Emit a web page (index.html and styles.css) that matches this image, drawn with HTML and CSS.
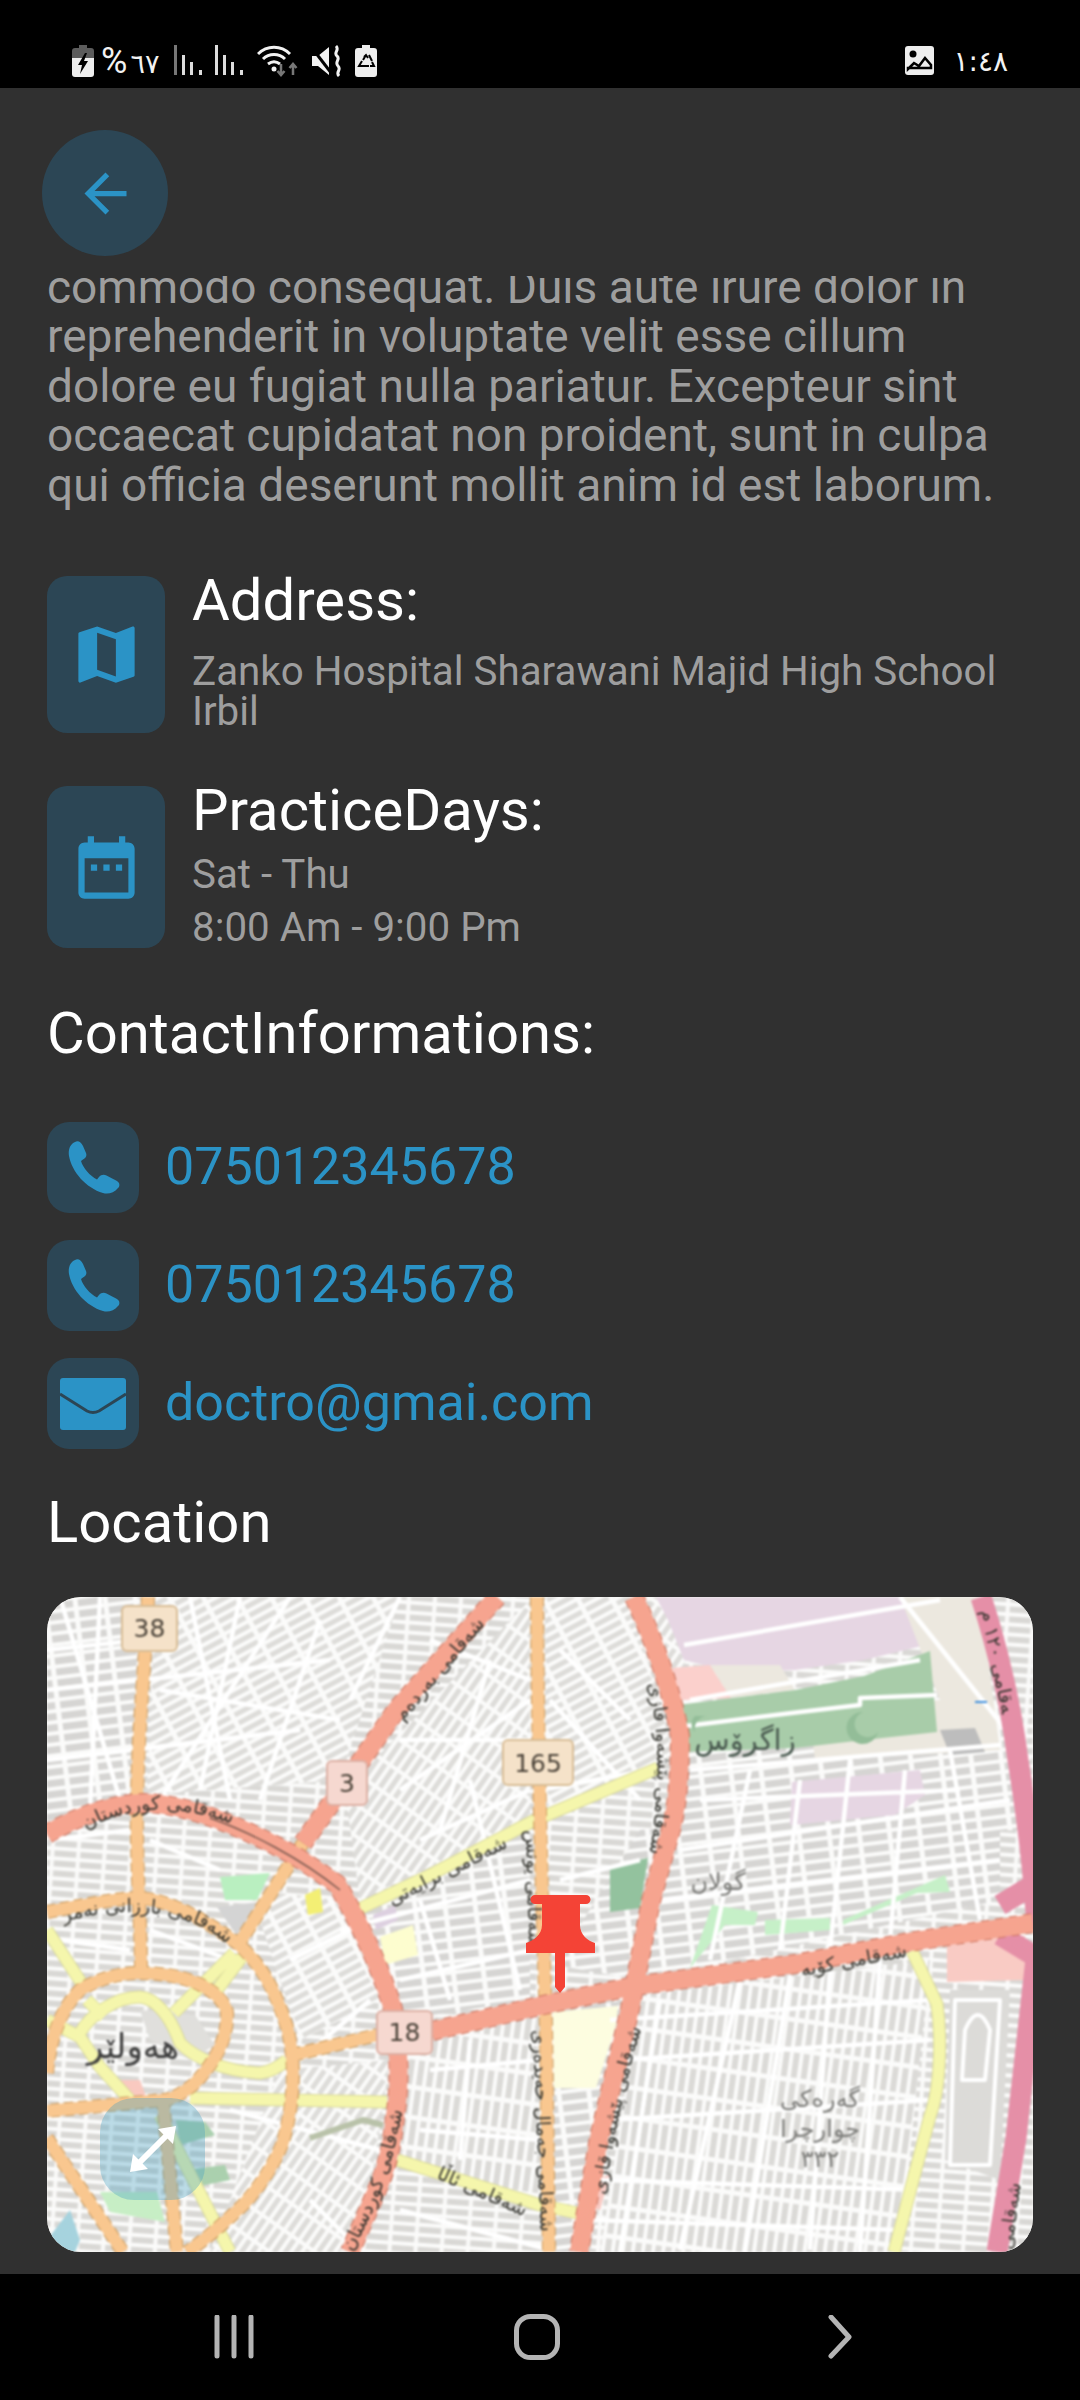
FILE: index.html
```html
<!DOCTYPE html>
<html lang="en">
<head>
  <meta charset="UTF-8" />
  <meta name="viewport" content="width=device-width, initial-scale=1.0"/>
  <title>Doctor Details</title>
  <link rel="stylesheet" href="styles.css">
</head>
<body>
  <header class="status-bar">
    <div class="status-group">
      <svg class="st-icon" width="22" height="32" viewBox="0 0 22 32">
        <path fill="#5c5c5c" d="M7 0h8v3h4a3 3 0 0 1 3 3v7H0V6a3 3 0 0 1 3-3h4z"/>
        <path fill="#eee" d="M0 13h22v16a3 3 0 0 1-3 3H3a3 3 0 0 1-3-3z"/>
        <path fill="#000" d="M13 8l-7 12h4l-2 9 8-13h-4l3-8z"/>
      </svg>
      <span class="st-text st-pct"><span class="st-sign">%</span>٦٧</span>
      <svg class="st-icon st-signal" width="29" height="30" viewBox="0 0 29 30">
        <rect x="0" y="0" width="3" height="30" fill="#777"/>
        <rect x="8" y="10" width="3" height="20" fill="#ddd"/>
        <rect x="16" y="17" width="3" height="13" fill="#ddd"/>
        <rect x="25" y="25" width="3" height="5" fill="#ddd"/>
      </svg>
      <svg class="st-icon st-signal" width="29" height="30" viewBox="0 0 29 30">
        <rect x="0" y="0" width="3" height="30" fill="#ddd"/>
        <rect x="8" y="10" width="3" height="20" fill="#ddd"/>
        <rect x="16" y="17" width="3" height="13" fill="#ddd"/>
        <rect x="25" y="25" width="3" height="5" fill="#ddd"/>
      </svg>
      <svg class="st-icon" width="42" height="32" viewBox="0 0 42 32">
        <path fill="none" stroke="#f2f2f2" stroke-width="3" d="M1 9C10 0 24 0 33 9M6 14c6-6 16-6 22 0M11 19c4-3 8-3 12 0"/>
        <circle cx="17" cy="24" r="2.5" fill="#f2f2f2"/>
        <path fill="none" stroke="#777" stroke-width="2.5" d="M24 19v11m-3.500-4l3.500 4 3.500-4M36 30V19m-3.500 4l3.500-4 3.500 4"/>
      </svg>
      <svg class="st-icon" width="30" height="32" viewBox="0 0 30 32">
        <path fill="#f2f2f2" d="M0 11h6l11-9v28L6 21H0z"/>
        <path fill="none" stroke="#000" stroke-width="3" d="M0 3l20 26"/>
        <path fill="none" stroke="#f2f2f2" stroke-width="3" d="M24 1c4 4-3 7 1 10s-3 6 1 10-3 6 1 10"/>
      </svg>
      <svg class="st-icon" width="22" height="32" viewBox="0 0 22 32">
        <path fill="#eee" d="M7 0h8v3h4a3 3 0 0 1 3 3v23a3 3 0 0 1-3 3H3a3 3 0 0 1-3-3V6a3 3 0 0 1 3-3h4z"/>
        <path fill="none" stroke="#000" stroke-width="2" d="M11 10l-3 5m6-5l3 6m-2 5h4l-2-4M8 21H4l3-5m1 5h6m-5-9l2-2 2 3"/>
      </svg>
    </div>
    <div class="status-group status-right">
      <svg width="29" height="29" viewBox="0 0 29 29">
        <rect width="29" height="29" rx="3" fill="#eee"/>
        <circle cx="8" cy="8" r="3.500" fill="#000"/>
        <path fill="none" stroke="#000" stroke-width="2.500" d="M3 23l6-6 5 3 6-8 6 7v3H3z"/>
      </svg>
      <span class="st-text st-time">١:٤٨</span>
    </div>
  </header>

  <main class="content">
    <button class="back-btn">
      <svg width="63" height="63" viewBox="0 0 24 24"><path d="M20 11H7.830l5.590-5.590L12 4l-8 8 8 8 1.410-1.410L7.830 13H20v-2z"/></svg>
    </button>

    <div class="about">
      <p>commodo consequat. Duis aute irure dolor in reprehenderit in voluptate velit esse cillum dolore eu fugiat nulla pariatur. Excepteur sint occaecat cupidatat non proident, sunt in culpa qui officia deserunt mollit anim id est laborum.</p>
    </div>

    <section class="info-row address">
      <div class="info-icon">
        <svg width="75" height="75" viewBox="0 0 24 24"><path d="M20.500 3l-.16.030L15 5.100 9 3 3.360 4.900c-.21.070-.36.250-.36.480V20.500c0 .280.220.500.500.500l.16-.030L9 18.900l6 2.100 5.640-1.900c.21-.070.360-.250.360-.480V3.500c0-.280-.220-.500-.500-.500zM15 19l-6-2.110V5l6 2.110V19z"/></svg>
      </div>
      <div class="info-body">
        <h3 class="title">Address:</h3>
        <p class="sub sub-tight">Zanko Hospital Sharawani Majid High School Irbil</p>
      </div>
    </section>

    <section class="info-row days">
      <div class="info-icon">
        <svg width="75" height="75" viewBox="0 0 24 24"><path d="M9 11H7v2h2v-2zm4 0h-2v2h2v-2zm4 0h-2v2h2v-2zm2-7h-1V2h-2v2H8V2H6v2H5c-1.110 0-1.990.900-1.990 2L3 20c0 1.100.890 2 2 2h14c1.100 0 2-.900 2-2V6c0-1.100-.900-2-2-2zm0 16H5V9h14v11z"/></svg>
      </div>
      <div class="info-body">
        <h3 class="title">PracticeDays:</h3>
        <p class="sub sub-days">Sat - Thu</p>
        <p class="sub sub-days">8:00 Am - 9:00 Pm</p>
      </div>
    </section>

    <h3 class="title contact-title">ContactInformations:</h3>

    <div class="contact-list">
      <div class="contact-row">
        <div class="contact-icon">
          <svg width="53" height="53" viewBox="0 0 53 53"><path d="M8 1C11-1 14 1 16 5l3 7c1 3 0 5-3 6.500l-2 1.500c2 7 9 15 16 18.500l2-2.500c2-2.500 5-3 7.500-1.500L50 40c3 2 3 5 1 7-4 5-10 6.500-15 5C19 47 5 31 2 15 1 9 3 3 8 1z"/></svg>
        </div>
        <span class="contact-text">075012345678</span>
      </div>
      <div class="contact-row">
        <div class="contact-icon">
          <svg width="53" height="53" viewBox="0 0 53 53"><path d="M8 1C11-1 14 1 16 5l3 7c1 3 0 5-3 6.500l-2 1.500c2 7 9 15 16 18.500l2-2.500c2-2.500 5-3 7.500-1.500L50 40c3 2 3 5 1 7-4 5-10 6.500-15 5C19 47 5 31 2 15 1 9 3 3 8 1z"/></svg>
        </div>
        <span class="contact-text">075012345678</span>
      </div>
      <div class="contact-row">
        <div class="contact-icon">
          <svg width="66" height="52" viewBox="0 0 66 52">
            <rect width="66" height="52" rx="3"/>
            <path class="env-fold" d="M0 16l27 17q6 3 12 0l27-17"/>
          </svg>
        </div>
        <span class="contact-text">doctro@gmai.com</span>
      </div>
    </div>

    <h3 class="title location-title">Location</h3>

    <div class="map">
      <svg class="map-svg" width="986" height="655" viewBox="47 1597 986 655">
        <defs>
          <pattern id="blk-a" width="26" height="10" patternUnits="userSpaceOnUse" patternTransform="rotate(4)">
            <rect width="26" height="10" fill="#fbfbfa"/>
            <rect x="1.500" y="2" width="22" height="6" fill="#d9d8d5"/>
          </pattern>
          <pattern id="blk-b" width="10" height="30" patternUnits="userSpaceOnUse" patternTransform="rotate(8)">
            <rect width="10" height="30" fill="#fbfbfa"/>
            <rect x="2" y="2" width="6" height="25" fill="#dbdad7"/>
          </pattern>
          <pattern id="blk-c" width="30" height="9" patternUnits="userSpaceOnUse" patternTransform="rotate(-28)">
            <rect width="30" height="9" fill="#fbfbfa"/>
            <rect x="2" y="2" width="25" height="5" fill="#dddcd9"/>
          </pattern>
          <pattern id="blk-d" width="9" height="26" patternUnits="userSpaceOnUse" patternTransform="rotate(35)">
            <rect width="9" height="26" fill="#fbfbfa"/>
            <rect x="2" y="2" width="5" height="22" fill="#dddcd9"/>
          </pattern>
          <pattern id="blk-e" width="30" height="11" patternUnits="userSpaceOnUse" patternTransform="rotate(-7)">
            <rect width="30" height="11" fill="#fbfbfa"/>
            <rect x="2" y="2" width="25" height="7" fill="#d6d5d3"/>
          </pattern>

          <g id="minor">
            <path d="M47 1690L330 1660M47 1760L300 1730M190 1597L230 1800M290 1597L160 1800M60 1597L120 1800M400 1597L350 1700"/>
            <path d="M47 1650L140 1640M100 1597L90 1810M240 1597L200 1790M320 1620L260 1800M160 1690L340 1720"/>
            <path d="M400 1790L530 1700M420 1840L530 1790M340 1930L530 1880M400 1980L530 1950M470 1780L520 1990"/>
            <path d="M430 1640L530 1680M400 1740L530 1740M490 1660L440 1830M420 1900L450 2000"/>
            <path d="M560 1650L630 1720M550 1700L640 1800M540 1790L650 1770M560 1880L640 1860"/>
            <path d="M690 1770L1000 1745M680 1850L1010 1800M750 1770L710 1960M850 1760L830 1950M950 1750L980 1920"/>
            <path d="M700 1800L960 1790M800 1780L780 1950M905 1770L890 1940M660 1900L1000 1860"/>
            <path d="M620 2060L930 2040M610 2120L930 2100M600 2180L920 2190M740 1980L680 2250M830 1970L810 2250"/>
            <path d="M660 2000L620 2252M790 1975L745 2252M880 1960L860 2252M610 2020L930 2000M590 2220L900 2230"/>
            <path d="M430 2070L540 2060M420 2130L540 2140M470 2040L460 2160M400 2210L550 2250"/>
            <path d="M230 2110L380 2150M300 2060L370 2000M290 1960L370 1920M310 2200L360 2250"/>
            <path d="M50 1840L130 1830M150 1840L220 1870M60 1940L130 1950M150 1930L230 1960"/>
            <path d="M684 1645L940 1600M690 1700L920 1660M900 1597L1030 1760"/>
            <path d="M678 1727L800 1712L860 1705L860 1698L937 1695"/>
          </g>
          <g id="r-orange">
            <path d="M148 1597C146 1660 138 1720 137 1803C136 1870 141 1920 141 1973"/>
            <path d="M47 1912C100 1902 120 1898 140 1898C170 1900 205 1920 237 1943C262 1965 275 1990 287 2027C298 2070 292 2110 283 2142C272 2170 255 2192 243 2205C222 2225 205 2240 187 2252"/>
            <path d="M47 2073C50 2040 60 2010 80 1990C100 1978 120 1973 140 1973C165 1973 185 1978 197 1983C212 1990 224 2000 227 2012C228 2035 218 2060 193 2085C180 2095 170 2100 163 2100L47 2111"/>
            <path d="M303 1843L240 1942"/>
            <path d="M293 2055L377 2035"/>
            <path d="M163 2100L177 2252M47 2138L123 2252"/>
            <path d="M537 1597C538 1800 544 1950 546 2026L549 2252"/>
          </g>
          <g id="r-yellow">
            <path d="M912 1951L937 2004C942 2040 940 2090 930 2116L894 2252"/>
            <path d="M357 1910L430 1875L533 1821L658 1768"/>
            <path d="M47 1930L84 1987M87 2000L104 2017M174 2013L234 1953M217 1990L242 1957"/>
            <path d="M80 2033C90 2015 115 1997 140 1997C155 1998 170 2015 180 2043C195 2058 225 2072 260 2073C270 2072 280 2066 287 2060"/>
            <path d="M47 2020L80 2037L100 2067L130 2100"/>
            <path d="M190 2098L387 2102"/>
            <path d="M397 2160L540 2205L582 2214"/>
            <path d="M160 2115L230 2252"/>
          </g>
          <g id="r-salmon">
            <path d="M47 1834C80 1815 115 1803 147 1803C190 1805 245 1828 297 1857L337 1884C355 1915 378 1960 393 2009C400 2050 400 2090 395 2116C392 2150 385 2170 380 2183L350 2252"/>
            <path d="M497 1597L397 1709L347 1781L303 1843"/>
            <path d="M634 1597C650 1630 672 1690 680 1736C680 1770 678 1800 672 1826L651 1901L630 2009L599 2138L579 2252"/>
            <path d="M432 2031L548 2004L634 1986L795 1964L909 1942L1033 1923"/>
          </g>
          <g id="r-pink">
            <path d="M981 1597C995 1640 1010 1700 1018 1760C1026 1810 1034 1870 1037 1930"/>
            <path d="M1037 1950L1016 2138L997 2252"/>
            <path d="M1000 1905L1033 1885M1000 1935L1033 1955"/>
          </g>

          <path id="lbl-kurd" d="M86 1830C130 1805 175 1803 232 1824"/>
          <path id="lbl-barz" d="M64 1922C110 1908 180 1905 222 1940"/>
          <path id="lbl-bard" d="M403 1722L482 1628"/>
          <path id="lbl-bray" d="M392 1906L510 1846"/>
          <path id="lbl-gorgi" d="M352 2252C375 2210 392 2170 402 2112"/>
          <path id="lbl-ala" d="M436 2178L532 2220"/>
          <path id="lbl-koya" d="M802 1976L910 1956"/>
          <path id="lbl-pish1" d="M648 1684C660 1730 660 1790 650 1850"/>
          <path id="lbl-pish2" d="M605 2195C615 2130 628 2070 644 2020"/>
          <path id="lbl-jam1" d="M526 1830L530 1985"/>
          <path id="lbl-jam2" d="M533 2030L541 2240"/>
          <path id="lbl-moto1" d="M981 1611L1002 1714"/>
          <path id="lbl-moto2" d="M1012 2250L1022 2175"/>
        </defs>

        <g class="map-soft">
          <rect x="47" y="1597" width="986" height="655" fill="url(#blk-a)"/>
          <polygon points="47,1597 140,1597 130,1800 47,1830" fill="url(#blk-e)"/>
          <polygon points="155,1597 400,1597 340,1780 147,1795" fill="url(#blk-c)"/>
          <polygon points="345,1790 530,1600 530,1820 360,1900" fill="url(#blk-d)"/>
          <polygon points="545,1597 630,1597 675,1760 545,1810" fill="url(#blk-c)"/>
          <polygon points="345,1920 530,1830 530,2000 400,2020" fill="url(#blk-e)"/>
          <polygon points="405,2040 540,2015 540,2200 400,2160" fill="url(#blk-b)"/>
          <polygon points="280,2070 390,2060 370,2190 340,2252 210,2252" fill="url(#blk-d)"/>
          <polygon points="250,1890 340,1900 380,2000 300,2040" fill="url(#blk-c)"/>
          <polygon points="555,1965 640,1830 1000,1800 1000,1900 640,1980" fill="url(#blk-e)"/>
          <polygon points="690,1720 1000,1700 1020,1830 680,1840" fill="url(#blk-e)"/>
          <polygon points="550,2010 630,2000 590,2252 550,2252" fill="url(#blk-e)"/>
          <polygon points="640,1995 930,1960 900,2252 600,2252" fill="url(#blk-b)"/>
          <polygon points="650,1597 660,1597 690,1650 660,1720" fill="url(#blk-d)"/>

          <!-- land use -->
          <polygon points="656,1597 900,1597 926,1645 864,1660 795,1670 730,1672 684,1660 668,1620" fill="#e6d6e3"/>
          <polygon points="900,1597 980,1597 1000,1750 815,1760 810,1715 940,1700" fill="#ece8df"/>
          <polygon points="672,1668 710,1665 731,1698 680,1700" fill="#fbd0cc"/>
          <polygon points="710,1665 780,1665 795,1690 731,1698" fill="#ece8df"/>
          <polygon points="678,1705 733,1698 795,1690 864,1676 930,1651 937,1732 864,1740 795,1748 685,1752" fill="#a8cca9"/>
          <polygon points="940,1730 975,1728 985,1752 950,1755" fill="#bdbdbd"/>
          <polygon points="792,1782 920,1770 925,1795 895,1815 790,1825" fill="#e6d6e3"/>
          <polygon points="843,1920 945,1875 950,1892 917,1893 843,1925" fill="#c6f0c8"/>
          <polygon points="765,1920 830,1918 830,1930 765,1935" fill="#c6f0c8"/>
          <polygon points="690,1968 712,1905 758,1912 755,1925 725,1925" fill="#c6f0c8"/>
          <polygon points="610,1866 648,1858 640,1908 610,1912" fill="#93c29e"/>
          <polygon points="553,2012 618,2006 616,2025 596,2088 554,2088" fill="#fdfde0"/>
          <polygon points="947,1940 1025,1936 1025,1980 947,1982" fill="#f9cbc4"/>
          <polygon points="950,1990 1010,1990 1000,2180 945,2160" fill="#dcdbd8"/>
          <polygon points="220,1877 270,1873 257,1900 225,1900" fill="#b9efc0"/>
          <polygon points="217,1907 260,1902 237,1936" fill="#d4d4d4"/>
          <polygon points="380,1937 413,1925 418,1955 385,1965" fill="#fdfdcf"/>
          <polygon points="373,1915 395,1905 398,1920 376,1930" fill="#ddd0e0"/>
          <polygon points="100,2192 157,2192 165,2222 110,2212" fill="#c7eec5"/>
          <polygon points="117,2080 140,2080 148,2102 120,2102" fill="#f9c9c0"/>
          <polygon points="176,2120 205,2122 215,2135 180,2145" fill="#aad0ae"/>
          <polygon points="185,2170 225,2165 230,2180 190,2188" fill="#aad0ae"/>
          <polygon points="140,2010 195,2015 215,2045 190,2060 150,2040" fill="#e0dfdc"/>
          <polygon points="590,2180 610,2175 600,2210 585,2205" fill="#f9cbc4"/>
          <polygon points="305,1895 320,1888 323,1912 308,1915" fill="#f3ef74"/>
          <polygon points="47,2240 70,2210 80,2240 75,2252 47,2252" fill="#a6d3de"/>

          <use href="#minor" class="r-minor"/>
          <path class="stadium" d="M955 2000H1000L990 2165H950zM965 2030Q978 2000 990 2030L985 2080H962z"/>
          <use href="#r-yellow" class="case-yellow"/>
          <use href="#r-yellow" class="road-yellow"/>
          <use href="#r-orange" class="case-orange"/>
          <use href="#r-orange" class="road-orange"/>
          <use href="#r-pink" class="road-pink"/>
          <use href="#r-salmon" class="case-salmon"/>
          <use href="#r-salmon" class="road-salmon"/>
          <path class="road-stream" d="M310 2138L363 2120L383 2125"/>
          <path class="road-dark" d="M210 1818C250 1832 300 1858 340 1890"/>
          <path class="road-blue" d="M975 1702H987"/>
          <path class="crescent" d="M863 1712a13 13 0 1 0 15 20a16 16 0 1 1-15-20zM695 1716a11 11 0 0 0 0 16a13 13 0 0 1 13-16z"/>

          <g class="shield">
            <rect x="122" y="1606" width="55" height="45" rx="5"/>
            <rect x="503" y="1740" width="70" height="45" rx="5"/>
          </g>
          <g class="shield shield-red">
            <rect x="327" y="1761" width="40" height="44" rx="5"/>
            <rect x="377" y="2011" width="55" height="43" rx="5"/>
          </g>
          <g class="shield-text">
            <text x="149.500" y="1637">38</text>
            <text x="538" y="1772">165</text>
            <text x="347" y="1792">3</text>
            <text x="404.500" y="2041">18</text>
          </g>

          <g class="map-label">
            <text><textPath href="#lbl-kurd">شەقامی کوردستان</textPath></text>
            <text><textPath href="#lbl-barz">شەقامی بارزانی نەمر</textPath></text>
            <text><textPath href="#lbl-bard">شەقامی بەردەم</textPath></text>
            <text><textPath href="#lbl-bray">شەقامی برایەتی</textPath></text>
            <text><textPath href="#lbl-gorgi">شەقامی کوردستان</textPath></text>
            <text><textPath href="#lbl-ala">شەقامی ئاڵا</textPath></text>
            <text><textPath href="#lbl-koya">شەقامی کۆیە</textPath></text>
            <text><textPath href="#lbl-pish1">شەقامی پێشەوا قازی</textPath></text>
            <text><textPath href="#lbl-pish2">شەقامی پێشەوا قازی</textPath></text>
            <text><textPath href="#lbl-jam1">شەقامی یونس</textPath></text>
            <text><textPath href="#lbl-jam2">شەقامی جەمال حەیدەری</textPath></text>
            <text><textPath href="#lbl-moto1">شەقامی ١٢٠ م</textPath></text>
            <text><textPath href="#lbl-moto2">شەقامی</textPath></text>
          </g>
          <text class="map-place map-city" x="133" y="2058">هەولێر</text>
          <text class="map-place map-zag" x="745" y="1750">زاگرۆس</text>
          <text class="map-place map-dist" x="718" y="1890">گولان</text>
          <text class="map-place map-dist" x="820" y="2107">گەرەکی</text>
          <text class="map-place map-dist" x="820" y="2137">چوارچرا</text>
          <text class="map-place map-dist" x="820" y="2167">٣٣٢</text>
        </g>

        <path class="map-pin" d="M535 1895H586a4.500 4.500 0 0 1 0 9H580V1925C580 1935 588 1941 595 1943V1953H565V1987L560 1993L555 1987V1953H526V1943C533 1941 542 1935 542 1925V1904H535a4.500 4.500 0 0 1 0-9z"/>
      </svg>
      <button class="map-expand">
        <svg width="46" height="46" viewBox="0 0 46 46">
          <path class="expand-line" d="M8 38L38 8"/>
          <path class="expand-head" d="M0 46L3 28L18 43zM46 0L43 18L28 3z"/>
        </svg>
      </button>
    </div>
  </main>

  <nav class="nav-bar">
    <svg width="40" height="44" viewBox="0 0 40 44">
      <path d="M3 2V41M20 2V41M37 2V41"/>
    </svg>
    <svg class="nav-home" width="46" height="46" viewBox="0 0 46 46">
      <rect x="2.500" y="2.500" width="41" height="41" rx="14"/>
    </svg>
    <svg class="nav-back" width="24" height="44" viewBox="0 0 24 44">
      <path d="M3 2L21 22L3 41"/>
    </svg>
  </nav>
</body>
</html>
```

FILE: styles.css
```css
* {
  box-sizing: border-box;
}
html, body {
  margin: 0;
  padding: 0;
}
body {
  width: 1080px;
  height: 2400px;
  overflow: hidden;
  display: flex;
  flex-direction: column;
  background: #303030;
  font-family: Roboto, Arial, sans-serif;
}

/* status bar */
.status-bar {
  height: 88px;
  flex: none;
  background: #000;
  display: flex;
  justify-content: space-between;
  padding: 45px 72px 0;
}
.status-group {
  display: flex;
  align-items: flex-start;
  gap: 13px;
}
.status-right {
  gap: 19px;
  padding-top: 1px;
}
.st-text {
  color: #f2f2f2;
  font-family: "DejaVu Sans", sans-serif;
  line-height: 32px;
}
.st-pct {
  font-size: 27px;
  margin-left: -6px;
  margin-right: 3px;
  white-space: nowrap;
}
.st-sign {
  font-family: Roboto, sans-serif;
  font-size: 36px;
  margin-right: 3px;
}
.st-time {
  font-size: 28px;
}
.st-signal {
  margin-left: -1px;
}

/* main */
.content {
  flex: 1;
  min-height: 0;
  overflow: hidden;
  position: relative;
  padding: 188px 47px 0;
}
.back-btn {
  position: absolute;
  top: 42px;
  left: 42px;
  width: 126px;
  height: 126px;
  border: none;
  border-radius: 50%;
  background: #2c4655;
  display: flex;
  align-items: center;
  justify-content: center;
  padding: 0;
}
.back-btn svg {
  fill: #2b93c6;
}
.about {
  height: 234px;
  overflow: hidden;
  display: flex;
  flex-direction: column;
  justify-content: flex-end;
}
.about p {
  margin: 0;
  font-size: 46px;
  line-height: 49.500px;
  color: #9e9e9e;
}
.title {
  margin: 0;
  font-weight: 400;
  font-size: 58px;
  line-height: 48px;
  color: #fff;
}
.info-row {
  display: flex;
  align-items: flex-start;
  gap: 27px;
}
.address {
  margin-top: 66px;
}
.days {
  margin-top: 53px;
}
.info-icon {
  width: 118px;
  flex: none;
  border-radius: 20px;
  background: #2c4655;
  display: flex;
  align-items: center;
  justify-content: center;
}
.info-icon svg {
  fill: #2b93c6;
}
.address .info-icon {
  height: 157px;
}
.days .info-icon {
  height: 162px;
}
.sub {
  margin: 0;
  font-size: 40.300px;
  color: #9e9e9e;
}
.sub-tight {
  margin-top: 28px;
  line-height: 40px;
}
.sub-days {
  line-height: 53px;
}
.title + .sub-days {
  margin-top: 14px;
}
.contact-title {
  margin-top: 55px;
}
.contact-list {
  margin-top: 65px;
  display: flex;
  flex-direction: column;
  gap: 27px;
}
.contact-row {
  display: flex;
  align-items: center;
  gap: 26px;
}
.contact-icon {
  width: 92px;
  height: 91px;
  flex: none;
  border-radius: 22px;
  background: #2c4655;
  display: flex;
  align-items: center;
  justify-content: center;
}
.contact-icon svg {
  fill: #2b93c6;
}
.env-fold {
  fill: none;
  stroke: #2c4655;
  stroke-width: 3;
}
.contact-text {
  font-size: 52px;
  padding-bottom: 3px;
  color: #2b93c6;
}
.location-title {
  margin-top: 49px;
}

/* map */
.map {
  position: relative;
  margin-top: 51px;
  width: 986px;
  height: 655px;
  border-radius: 34px;
  overflow: hidden;
  background: #f4f3f0;
}
.map-svg {
  display: block;
}
.map-soft {
  filter: blur(1px);
}
.r-minor, .road-yellow, .road-orange, .road-salmon, .road-pink, .stadium,
.case-yellow, .case-orange, .case-salmon, .road-stream, .road-dark, .road-blue {
  fill: none;
  stroke-linejoin: round;
}
.r-minor {
  stroke: #fff;
  stroke-width: 4.500;
}
.stadium {
  stroke: #fff;
  stroke-width: 4;
}
.crescent {
  fill: #93bd98;
}
.case-yellow {
  stroke: #d8d89a;
  stroke-width: 13;
}
.road-yellow {
  stroke: #f5f6ac;
  stroke-width: 11;
}
.case-orange {
  stroke: #c99a5e;
  stroke-width: 14;
  stroke-dasharray: 9 5;
}
.road-orange {
  stroke: #f9c78f;
  stroke-width: 12;
}
.case-salmon {
  stroke: #c9735e;
  stroke-width: 20;
  stroke-dasharray: 8 6;
}
.road-salmon {
  stroke: #f6a48f;
  stroke-width: 18;
}
.road-pink {
  stroke: #e58fa7;
  stroke-width: 21;
}
.road-stream {
  stroke: #b9c2a9;
  stroke-width: 6;
}
.road-dark {
  stroke: #7a5a50;
  stroke-width: 1.500;
}
.road-blue {
  stroke: #3f8fdd;
  stroke-width: 2;
}
.shield rect {
  fill: #f5e2c9;
  stroke: #d8bd96;
  stroke-width: 2;
}
.shield-red rect {
  fill: #f6d8d0;
  stroke: #dcb0a4;
}
.shield-text text {
  font-family: "DejaVu Sans", sans-serif;
  font-size: 25px;
  fill: #4a4238;
  text-anchor: middle;
}
.map-label {
  font-family: "DejaVu Sans", sans-serif;
  font-size: 19px;
  fill: #35352f;
}
.map-place {
  font-family: "DejaVu Sans", sans-serif;
  text-anchor: middle;
  fill: #3e3e3e;
}
.map-city {
  font-size: 34px;
}
.map-zag {
  font-size: 29px;
  fill: #4a5a50;
}
.map-dist {
  font-size: 24px;
  fill: #7d7d7a;
}
.map-pin {
  fill: #f44336;
}
.map-expand {
  position: absolute;
  left: 53px;
  top: 501px;
  width: 105px;
  height: 102px;
  border: none;
  padding: 0;
  border-radius: 34px;
  background: rgba(70, 160, 195, 0.35);
  display: flex;
  align-items: center;
  justify-content: center;
}
.expand-line {
  stroke: #fff;
  stroke-width: 6;
}
.expand-head {
  fill: #fff;
}

/* nav */
.nav-bar {
  height: 126px;
  flex: none;
  background: #000;
  display: flex;
  align-items: flex-start;
  padding: 41px 0 0 214px;
}
.nav-home {
  margin-left: 260px;
  margin-top: -1px;
}
.nav-back {
  margin-left: 268px;
}
.nav-bar svg {
  fill: none;
  stroke: #b4b4b4;
  stroke-width: 5;
  stroke-linecap: round;
  stroke-linejoin: round;
}
```
